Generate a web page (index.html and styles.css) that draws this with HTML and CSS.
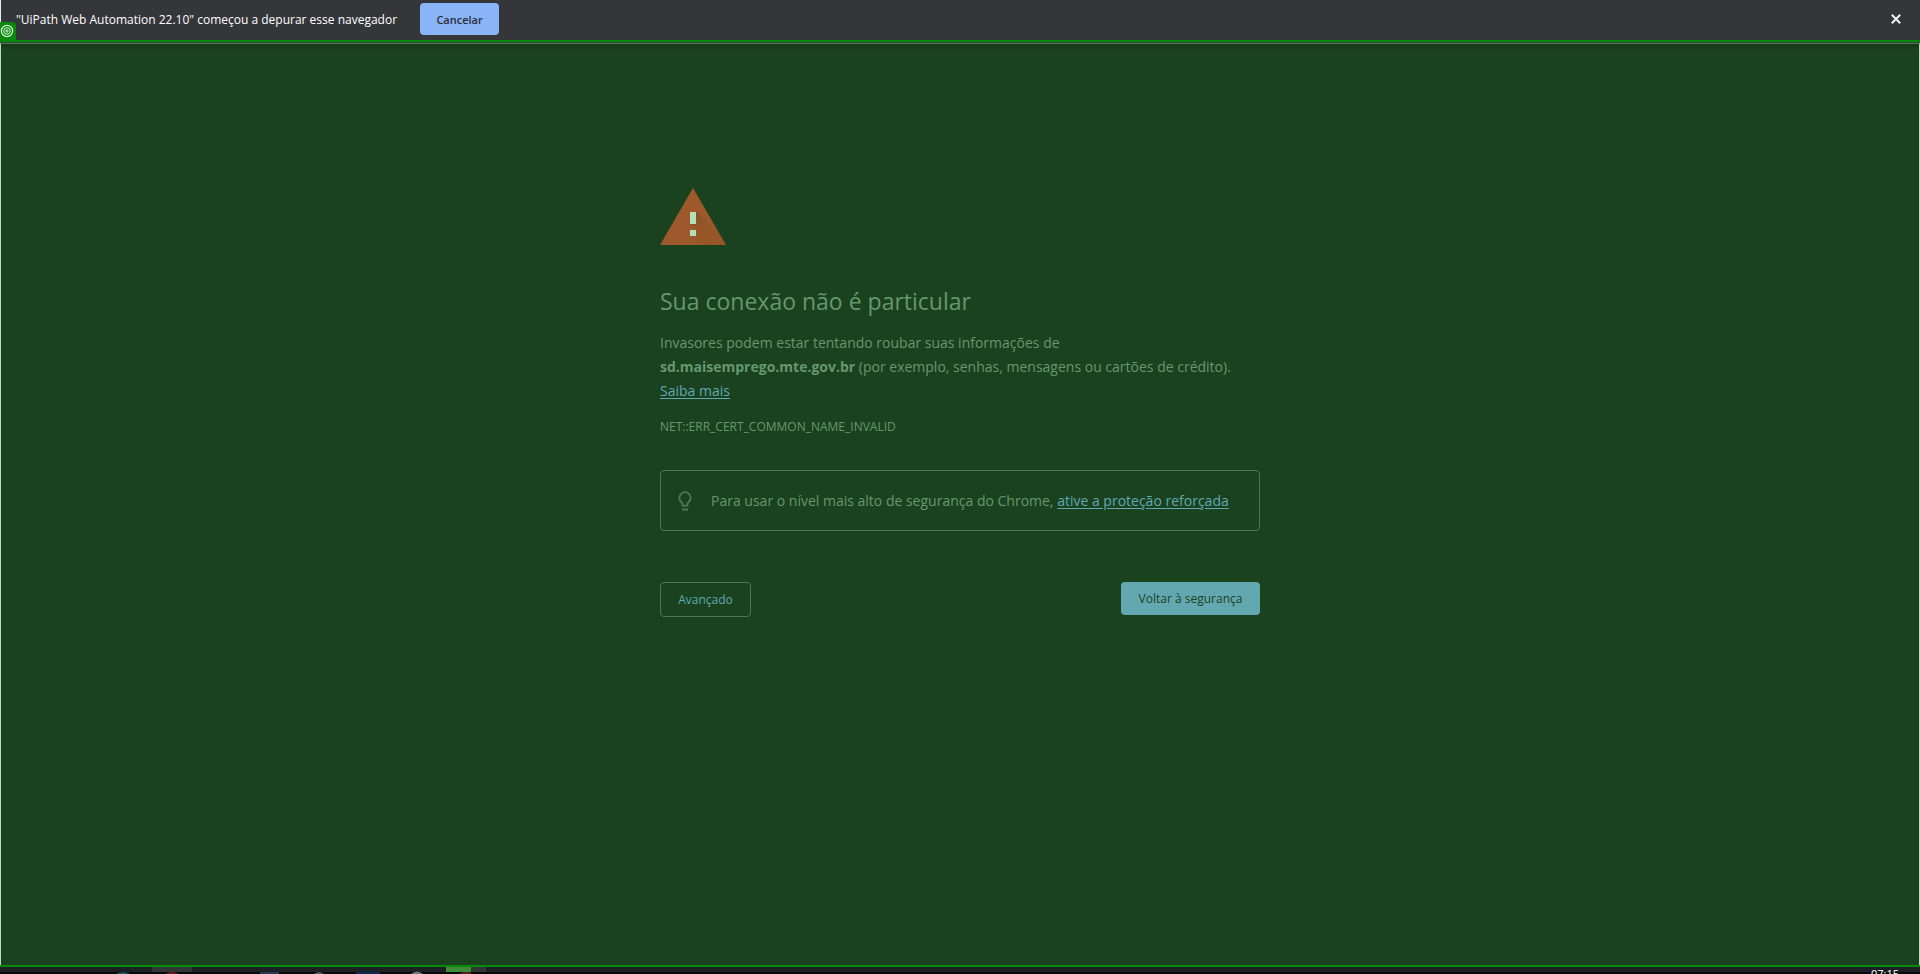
FILE: index.html
```html
<!DOCTYPE html>
<html lang="pt-BR">
<head>
<meta charset="utf-8">
<title>Erro de privacidade</title>
<link rel="stylesheet" href="styles.css">
</head>
<body>
<header class="infobar">
  <span class="infobar-text">"UiPath Web Automation 22.10" começou a depurar esse navegador</span>
  <button class="cancel" type="button">Cancelar</button>
  <button class="close" type="button" aria-label="Fechar">
    <svg width="10" height="10" viewBox="0 0 10 10"><path d="M.8.8l8.4 8.4M9.2.8L.8 9.2" stroke="#f1f3f4" stroke-width="2" fill="none"/></svg>
  </button>
  <span class="badge">
    <svg width="14" height="14" viewBox="0 0 14 14" fill="none" stroke="#d9f2da"><circle cx="7" cy="7" r="5.6" stroke-width="1.2"/><circle cx="7" cy="7" r="3.3"/><circle cx="7" cy="7" r="1.2"/></svg>
  </span>
</header>
<main class="page">
  <div class="content">
    <svg class="warning" width="66" height="57" viewBox="0 0 66 57">
      <defs>
        <linearGradient id="shade" x1="0" y1="0" x2="1" y2="1"><stop offset="0" stop-color="#704a20" stop-opacity=".8"/><stop offset=".4" stop-color="#8a5224" stop-opacity=".35"/><stop offset="1" stop-color="#8a5224" stop-opacity=".25"/></linearGradient>
      </defs>
      <path d="M33 0l33 57H0z" fill="#9d592b"/>
      <path d="M36 24l20 16 10 17H39l-9-9h6v-6l-6-6h6z" fill="url(#shade)"/>
      <path d="M30 24h6v12h-6zM30 42h6v6h-6z" fill="#b5dfb7"/>
    </svg>
    <h1>Sua conexão não é particular</h1>
    <p class="message">Invasores podem estar tentando roubar suas informações de<br><strong>sd.maisemprego.mte.gov.br</strong> (por exemplo, senhas, mensagens ou cartões de crédito).<br><a href="#saiba">Saiba mais</a></p>
    <p class="code">NET::ERR_CERT_COMMON_NAME_INVALID</p>
    <div class="tip">
      <svg width="14" height="20" viewBox="0 0 14 20" fill="none" stroke="#4a7850" stroke-width="1.8"><path d="M4.500 14.600v-2.500C2.400 11 1.400 9.300 1.400 6.800a5.600 5.600 0 0 1 11.200 0c0 2.500-1 4.200-3.100 5.300v2.500z"/><path d="M4 18.500h6" stroke-width="2"/></svg>
      <p>Para usar o nível mais alto de segurança do Chrome, <a href="#protecao">ative a proteção reforçada</a></p>
    </div>
    <div class="actions">
      <button class="secondary" type="button">Avançado</button>
      <button class="primary" type="button">Voltar à segurança</button>
    </div>
  </div>
</main>
<footer class="taskbar">
  <svg class="apps" width="560" height="7" viewBox="0 0 560 7">
    <path d="M152 0h40v5h-40z" fill="#323536"/>
    <path d="M446 0h25v5h-25z" fill="#3f8b38"/><path d="M471 0h15v5h-15z" fill="#323538"/>
    <path d="M116 7q7-4 14 0z" fill="#17535c"/><path d="M165 7q7-4 14 0z" fill="#672323"/><path d="M459 7q7-4 14 0z" fill="#672323"/>
    <path d="M260 5h19v2h-19z" fill="#283a50"/><path d="M314 7q5-4 10 0z" fill="#55595b"/>
    <path d="M356 5h24v2h-24z" fill="#082954"/><path d="M411 7q6-5 12 0z" fill="#777"/>
  </svg>
  <time class="clock">07:15</time>
</footer>
</body>
</html>
```
FILE: styles.css
```css
* { box-sizing: border-box; }
body {
  margin: 0;
  height: 100vh;
  display: flex;
  flex-direction: column;
  overflow: hidden;
  background: #2c4c30;
  color: #65986c;
  font-family: "Segoe UI", "Open Sans", "Noto Sans", sans-serif;
}
button { font-family: inherit; cursor: pointer; }
h1, p { margin: 0; }
a { color: #5fa8b4; text-underline-offset: 2px; }
.infobar {
  position: relative;
  flex: none;
  display: flex;
  align-items: center;
  height: 42px;
  padding: 0 19px 2px 15px;
  background: #35363a;
  border-left: 1px solid #e8eaed;
  border-bottom: 2px solid #078a0b;
}
.infobar-text { color: #fff; font-size: 12px; }
.cancel {
  height: 32px;
  min-width: 79px;
  margin-left: 23px;
  padding: 0 12px;
  border: 0;
  border-radius: 4px;
  background: #8ab4f8;
  color: #292e39;
  font-size: 11px;
  font-weight: 600;
}
.close { display: flex; margin-left: auto; padding: 0; border: 0; background: none; }
.badge {
  position: absolute;
  left: -1px;
  top: 22px;
  width: 16px;
  height: 20px;
  padding-top: 2px;
  border-radius: 0 4px 0 0;
  background: #078a0b;
}
.badge svg { display: block; }
.page {
  flex: 1;
  min-height: 0;
  margin-top: 1px;
  border-left: 1px solid #b5dfb7;
  border-right: 1px solid #b5dfb7;
  border-top: 1px solid #4f7555;
  background: linear-gradient(#173819, #1b421e 6px);
}
.content { max-width: 600px; margin: 0 auto; padding-top: 144px; }
.warning { display: block; }
h1 { margin-top: 40px; font-size: 23px; line-height: 32px; font-weight: 400; }
.message { margin-top: 14px; font-size: 14px; line-height: 24px; }
.code { margin-top: 16px; font-size: 12px; line-height: 16px; }
.tip {
  display: flex;
  align-items: center;
  gap: 19px;
  height: 61px;
  margin-top: 35px;
  padding: 0 17px;
  border: 1px solid #4a7850;
  border-radius: 4px;
  font-size: 14px;
  line-height: 24px;
}
.tip svg { flex: none; }
.tip p { white-space: nowrap; }
.actions { display: flex; justify-content: space-between; align-items: flex-start; margin-top: 51px; }
.actions button { border-radius: 4px; font-size: 12px; padding: 0 12px; }
.secondary { height: 35px; min-width: 91px; border: 1px solid #4a7850; background: none; color: #5fa8b4; }
.primary { height: 33px; min-width: 139px; border: 0; background: #63a8b0; color: #1b421e; }
.taskbar {
  flex: none;
  display: flex;
  justify-content: space-between;
  align-items: flex-start;
  height: 9px;
  overflow: hidden;
  border-top: 2px solid #078a0b;
  background: linear-gradient(#1c2024 5px, #060809 5px);
}
.apps { flex: none; }
.clock { padding-right: 21px; color: #fff; font-size: 11px; line-height: 14px; }
```
